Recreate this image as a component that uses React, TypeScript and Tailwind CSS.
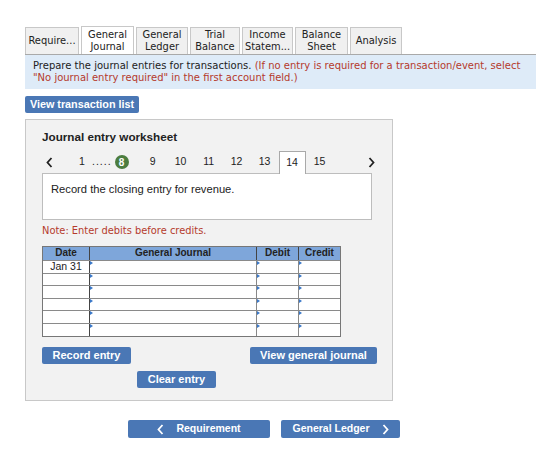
import React from "react";

const tabs = [
  { label: ["Require..."], w: "w-[54px]" },
  { label: ["General", "Journal"], w: "w-[53px]", active: true },
  { label: ["General", "Ledger"], w: "w-[52px]" },
  { label: ["Trial", "Balance"], w: "w-[50px]" },
  { label: ["Income", "Statem..."], w: "w-[51px]" },
  { label: ["Balance", "Sheet"], w: "w-[53px]" },
  { label: ["Analysis"], w: "w-[52px]" },
];

function Chevron({ dir, className }: { dir: "left" | "right"; className?: string }) {
  return (
    <svg width="7" height="11" viewBox="0 0 7 11" className={className}>
      <polyline
        points={dir === "left" ? "5.5,1 1.5,5.5 5.5,10" : "1.5,1 5.5,5.5 1.5,10"}
        fill="none"
        stroke="currentColor"
        strokeWidth="1.8"
      />
    </svg>
  );
}

function Marker() {
  return (
    <span className="absolute left-0 top-0 h-0 w-0 border-t-[2px] border-b-[2px] border-l-[3px] border-t-transparent border-b-transparent border-l-[#3a78c9]" />
  );
}

export default function App() {
  const rows = Array.from({ length: 6 });
  return (
    <div className="h-[458px] w-[560px] bg-white pl-[25px] pt-[26px] font-['DejaVu_Sans',sans-serif] text-[#222]">
      {/* Tabs */}
      <div className="flex h-[28px] items-end gap-[2px]">
        {tabs.map((t) => (
          <div
            key={t.label.join()}
            className={`flex flex-col items-center justify-center border border-b-0 border-[#c8c8c8] text-[9.9px] leading-[12px] ${t.w} ${
              t.active ? "h-[28px] bg-white" : "h-[27px] bg-[#f0f0f0]"
            }`}
          >
            {t.label.map((l) => (
              <span key={l}>{l}</span>
            ))}
          </div>
        ))}
      </div>

      {/* Instructions */}
      <div className="w-[511px] border-t border-[#a9a9a9] bg-[#deebf8] px-[8px] pb-[5px] pt-[5px] text-[10px] leading-[12px]">
        Prepare the journal entries for transactions.{" "}
        <span className="text-[#b53a2c]">
          (If no entry is required for a transaction/event, select "No journal entry required" in the first account field.)
        </span>
      </div>

      <button className="mt-[7px] flex h-[17px] w-[114px] items-center justify-center rounded-[2px] bg-[#4a77b5] font-['Liberation_Sans',sans-serif] text-[10.8px] font-bold text-white">
        View transaction list
      </button>

      {/* Worksheet */}
      <div className="mt-[6px] h-[282px] w-[368px] border border-[#c8c8c8] bg-[#f2f2f2] pl-[16px] pt-[10px] font-['Liberation_Sans',sans-serif]">
        <div className="text-[11.7px] font-bold leading-[14px]">Journal entry worksheet</div>

        <div className="mt-[7px] flex h-[22px] items-center text-[10.5px]">
          <Chevron dir="left" className="ml-[4px] text-[#222]" />
          <span className="ml-[25px] w-[8px] text-center">1</span>
          <span className="ml-[6px] tracking-[1px]">.....</span>
          <span className="ml-[3px] flex h-[14px] w-[14px] items-center justify-center rounded-full bg-[#4c7d3f] text-[10px] font-bold text-white">
            8
          </span>
          {["9", "10", "11", "12", "13"].map((n, i) => (
            <span key={n} className={`w-[28px] text-center ${i === 0 ? "ml-[10px]" : ""}`}>
              {n}
            </span>
          ))}
          <span className="relative z-10 -mb-px flex h-[23px] w-[27px] items-center justify-center self-end border border-b-0 border-[#a9a9a9] bg-white">
            14
          </span>
          <span className="w-[28px] text-center">15</span>
          <Chevron dir="right" className="ml-[34px] text-[#222]" />
        </div>

        <div className="h-[47px] w-[330px] border border-[#bdbdbd] bg-white px-[8px] pt-[7px] text-[11.2px]">
          Record the closing entry for revenue.
        </div>

        <div className="mt-[5px] font-['DejaVu_Sans',sans-serif] text-[9.9px] leading-[12px] text-[#b53a2c]">
          Note: Enter debits before credits.
        </div>

        <div className="mt-[9px] w-[299px] border border-[#777] text-[10px]">
          <div className="grid h-[13px] grid-cols-[47px_167px_42px_1fr] bg-[#7ea6da] font-bold leading-[12px]">
            <div className="border-r border-[#444] text-center">Date</div>
            <div className="border-r border-[#444] text-center">General Journal</div>
            <div className="border-r border-[#444] text-center">Debit</div>
            <div className="text-center">Credit</div>
          </div>
          {rows.map((_, i) => (
            <div
              key={i}
              className="grid h-[12.6px] grid-cols-[47px_167px_42px_1fr] border-t border-[#8a8a8a] bg-white leading-[11px]"
            >
              <div className="border-r border-[#444] text-center text-[10.5px]">{i === 0 ? "Jan 31" : ""}</div>
              <div className="relative border-r border-[#888]">
                <Marker />
              </div>
              <div className="relative border-r border-[#888]">
                <Marker />
              </div>
              <div className="relative">
                <Marker />
              </div>
            </div>
          ))}
        </div>

        <div className="mt-[10px] flex w-[335px] justify-between">
          <button className="flex h-[17px] w-[89px] items-center justify-center rounded-[2px] bg-[#4a77b5] text-[11px] font-bold text-white">
            Record entry
          </button>
          <button className="flex h-[17px] w-[127px] items-center justify-center rounded-[2px] bg-[#4a77b5] text-[11px] font-bold text-white">
            View general journal
          </button>
        </div>
        <button className="ml-[95px] mt-[7px] flex h-[17px] w-[79px] items-center justify-center rounded-[2px] bg-[#4a77b5] text-[11px] font-bold text-white">
          Clear entry
        </button>
      </div>

      {/* Bottom navigation */}
      <div className="ml-[103px] mt-[19px] flex gap-[11px] font-['Liberation_Sans',sans-serif] text-[10.5px] font-bold text-white">
        <button className="flex h-[18px] w-[142px] items-center justify-center gap-[12px] rounded-[2px] bg-[#4a77b5]">
          <Chevron dir="left" />
          Requirement
        </button>
        <button className="flex h-[18px] w-[119px] items-center justify-center gap-[12px] rounded-[2px] bg-[#4a77b5]">
          General Ledger
          <Chevron dir="right" />
        </button>
      </div>
    </div>
  );
}
